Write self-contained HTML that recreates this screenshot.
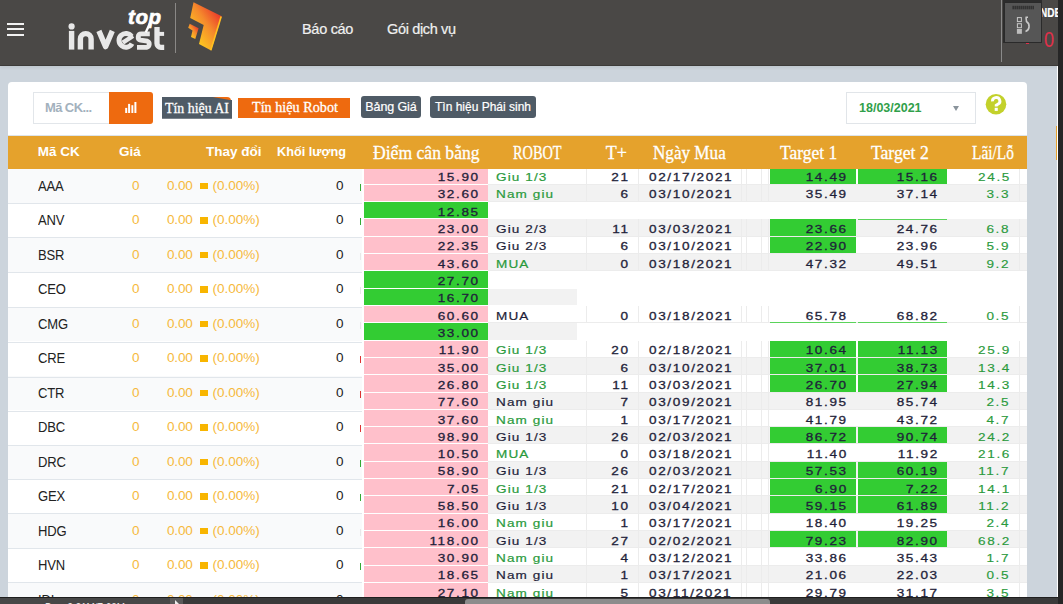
<!DOCTYPE html><html><head><meta charset="utf-8"><style>*{margin:0;padding:0;box-sizing:border-box}
html,body{width:1063px;height:604px;overflow:hidden}
body{background:#ccd4dc;font-family:"Liberation Sans",sans-serif;position:relative}
.abs{position:absolute}
#hdr{position:absolute;left:0;top:0;width:1063px;height:66px;background:#4a4846;border-bottom:1px solid #3d3b39;box-shadow:0 2px 3px rgba(0,0,0,0.06)}
.hb{position:absolute;left:7px;width:17px;height:2px;background:#f2f2f2}
.nav{position:absolute;top:20px;color:#f0f0f0;font-size:14.5px;line-height:18px;-webkit-text-stroke:0.2px #f0f0f0}
#card{position:absolute;left:8px;top:82px;width:1019px;height:600px;background:#fff;border-radius:4px}
#inp{position:absolute;left:33px;top:92px;width:77px;height:32px;border:1px solid #e2e6ea;background:#fff}
#inp span{position:absolute;left:11px;top:7px;font-size:13px;font-weight:bold;color:#a3b1bd;letter-spacing:-0.6px}
#obtn{position:absolute;left:109px;top:92px;width:44px;height:32px;background:#ee6a0f;border-radius:0 3px 3px 0}
.btn{position:absolute;color:#fff;white-space:nowrap}
.serif{font-family:"Liberation Serif",serif}
#thdr{position:absolute;left:8px;top:136px;width:1019px;height:32.7px;background:#e5a22c;z-index:2}
.th{z-index:3}
.th{position:absolute;color:#fff;white-space:nowrap}
.ths{font-weight:bold;font-size:13.5px;top:144px}
.thr{font-family:"Liberation Serif",serif;font-size:18px;top:143px;-webkit-text-stroke:0.3px #fff;transform-origin:0 0}
.ths{transform-origin:0 0}
#lt{position:absolute;left:8px;top:168.5px;width:354px;height:450px}
.lr{position:absolute;left:0;width:354px;height:34.5px;background:#fff}
.lb{position:absolute;left:0;width:354px;height:1px;background:#e1e6eb}
.lr.odd{background:#f9fafb}
.lr span{position:absolute;top:9px;letter-spacing:-0.15px;font-size:13.5px;line-height:16px;white-space:nowrap}
.c1{left:30px;color:#222;font-size:14px!important;transform:scaleX(0.93);transform-origin:0 0;margin-top:0.2px}
.c2{left:124px;color:#f6b93b}
.c3{left:159px;color:#f6b93b}
.c3b{left:204.5px;color:#f6b93b;letter-spacing:0!important}
.c4{left:328px;color:#222}
.sq{position:absolute;left:192px;top:14.1px;width:7.6px;height:6.9px;background:#f8b500}
.tick{position:absolute;left:352px;top:15px;width:1.2px;height:7px}
#rt{position:absolute;left:0;top:167.4px;width:1063px;height:450px}
.rr{position:absolute;left:0;width:1063px;height:17.317px}
.rr .bg{position:absolute;left:488px;width:539px;top:0;height:17.317px;border-bottom:1px solid #ececec}
.rr.g .bg{background:#f2f2f2}
.cell{position:absolute;top:0;height:16.317px}
.c-dcb{left:364px;width:123.6px}
.c-stub{left:488px;width:89px;background:#f2f2f2}
.c-t1{left:769.7px;width:86.3px}
.c-t2{left:857.8px;width:89.4px}
.pk{background:#ffc0cb}
.gr{background:#33cc33}
.tx{position:absolute;top:1.7px;line-height:16px;font-size:11.5px;color:#1f1f3a;white-space:nowrap;transform:scaleX(1.178);-webkit-text-stroke:0.3px currentColor}
.tr{transform-origin:100% 50%}
.tl{transform-origin:0 50%}
.num{letter-spacing:1.4px}
.wd{letter-spacing:0.95px}
.grn{color:#2a9a3c}
#foot{position:absolute;left:0;top:597px;width:1063px;height:7px;background:#3a3a3a;border-top:1px solid #1f1f1f;overflow:hidden}
#foot .fl{position:absolute;left:0;top:0;width:170px;height:6px;background:#474747}
#foot .fb{position:absolute;left:170px;top:0;width:13px;height:6px;background:#5a5a5a}
#wline{position:absolute;left:1057px;top:66px;width:1px;height:531px;background:#fff}
#foot .thumb{position:absolute;left:465px;top:1.3px;width:305px;height:6px;background:#8c8c8c;border-radius:3px 3px 0 0}
.ft{position:absolute;left:45px;top:2.5px;font-size:12px;line-height:14px;color:#e8e8e8;transform:scaleX(0.82);transform-origin:0 0}
#rstrip{position:absolute;left:1058px;top:0;width:5px;height:604px;background:#262626}
.vl{position:absolute;top:0;width:1px;height:17.317px;background:#ececec}
.gl{position:absolute;height:1px;background:#5ad35a}
.lai{-webkit-text-stroke:0.15px currentColor!important}
.rr{border-bottom:0}
#foot .far{position:absolute;left:174.5px;top:2px;width:0;height:0;border-left:4px solid #eee;border-top:4px solid transparent;border-bottom:4px solid transparent}
.wd{-webkit-text-stroke:0.2px currentColor}
</style></head><body><div id="hdr">
 <i class="hb" style="top:23px"></i><i class="hb" style="top:28px"></i><i class="hb" style="top:34px"></i>
 <div class="abs" style="left:128px;top:6px;font-size:20.5px;font-weight:bold;font-style:italic;color:#fff;line-height:22px;letter-spacing:0.6px;-webkit-text-stroke:0.7px #fff">top</div>
 <svg class="abs" style="left:0;top:0" width="170" height="60" fill="none" stroke="#e8e8e8">
  <rect x="68.9" y="30.9" width="5.4" height="18.7" fill="#e8e8e8" stroke="none"/>
  <circle cx="71.6" cy="26.4" r="3.1" fill="#e8e8e8" stroke="none"/>
  <path d="M80.4,49.6 V39 A5.35,5.35 0 0 1 91.1,39 V49.6" stroke-width="5.4"/>
  <path d="M98.9,30.9 L105.6,46.6 L112.3,30.9" stroke-width="5.4" stroke-linejoin="round"/>
  <path d="M131.6,36.4 A6.9,6.9 0 1 0 132,43.6" stroke-width="5"/><path d="M122.8,42.6 L133,36" stroke-width="4.4"/>
  <path d="M149.8,33.9 H141.3 A3.2,3.2 0 0 0 140.6,40.2 L147.3,41.2 A3.2,3.2 0 0 1 146.6,47.3 H137" stroke-width="4.8"/>
  <path d="M157,26.9 V43.5 A3.8,3.8 0 0 0 160.8,47.3 H164.2" stroke-width="5.3"/>
  <rect x="157" y="31.9" width="7.1" height="4" fill="#e8e8e8" stroke="none"/>
  <path d="M151.1,21 L145.8,32.2" stroke="#fff" stroke-width="2.4"/>
 </svg>
 <i class="abs" style="left:175px;top:3px;width:1px;height:50px;background:#8a8886"></i>
 <svg class="abs" style="left:0;top:0" width="240" height="60">
  <defs><linearGradient id="lg" x1="0.95" y1="0.2" x2="0.25" y2="0.95"><stop offset="0" stop-color="#e8302a"/><stop offset="0.45" stop-color="#f58a2c"/><stop offset="1" stop-color="#ffd21e"/></linearGradient></defs>
  <polygon points="193.5,2.3 221.7,16.2 211.1,50.6 199,44 203.7,25 190.2,18.1" fill="url(#lg)"/><path d="M221.2,16.5 L210.8,50.2" stroke="#ffc020" stroke-width="1.6"/>
  <polygon points="189.7,23.7 198.6,28.3 195.3,39 191,37.1 192.5,30.6 188.2,27.8" fill="url(#lg)"/>
 </svg>
 <div class="nav" style="left:302px;letter-spacing:-0.3px">Báo cáo</div>
 <div class="nav" style="left:387px;letter-spacing:-0.35px">Gói dịch vụ</div>
 <i class="abs" style="left:1001px;top:0;width:1px;height:62px;background:#8a8a8a"></i>
 <div class="abs" style="left:1039.5px;top:6px;font-size:12.5px;font-weight:bold;color:#fff;transform:scaleX(0.8);transform-origin:0 0;line-height:14px;-webkit-text-stroke:0.2px #fff">NDEX</div>
 <div class="abs" style="left:1044px;top:28.5px;font-size:22px;color:#e0304a;line-height:22px;transform:scaleX(0.82);transform-origin:0 0">0</div>
 <i class="abs" style="left:1026px;top:42.5px;width:3px;height:1.2px;background:#e0304a"></i>
 <div class="abs" style="left:1003px;top:0;width:39px;height:43px;background:#2c2c2c"></div>
 <div class="abs" style="left:1003.5px;top:1.5px;width:38px;height:41px;background:#565656;border:1px solid #2a2a2a"></div>
 <svg class="abs" style="left:1003px;top:0" width="40" height="44">
  <g fill="#252525"><rect x="9.6" y="5.8" width="1.1" height="3.5"/><rect x="11.6" y="5.8" width="1.1" height="3.5"/><rect x="13.6" y="5.8" width="1.1" height="3.5"/><rect x="15.6" y="5.8" width="1.1" height="3.5"/><rect x="17.6" y="5.8" width="1.1" height="3.5"/><rect x="19.6" y="5.8" width="1.1" height="3.5"/><rect x="21.6" y="5.8" width="1.1" height="3.5"/><rect x="23.6" y="5.8" width="1.1" height="3.5"/><rect x="25.6" y="5.8" width="1.1" height="3.5"/><rect x="27.6" y="5.8" width="1.1" height="3.5"/><rect x="29.6" y="5.8" width="1.1" height="3.5"/></g>
  <rect x="14.4" y="17.6" width="4" height="4" fill="none" stroke="#c8c8c8" stroke-width="1"/>
  <rect x="14.4" y="23.7" width="4" height="4" fill="none" stroke="#c8c8c8" stroke-width="1"/>
  <rect x="13.9" y="29" width="5" height="4.8" fill="#bdbdbd"/>
  <path d="M22.5,17.3 H25 M23,17.3 L23.5,21.5 A5,5.5 0 0 1 22.5,31.6" fill="none" stroke="#c8c8c8" stroke-width="1.6"/>
 </svg>
</div>
<div id="card"></div>
<div id="inp"><span>Mã CK...</span></div>
<div id="obtn"><svg class="abs" style="left:16px;top:10px" width="13" height="12"><rect x="0.2" y="5.9" width="2" height="5.1" fill="#fff"/><rect x="3.1" y="1.9" width="2" height="9.1" fill="#fff"/><rect x="6.4" y="3.2" width="1.9" height="7.8" fill="#fff"/><rect x="9.4" y="0" width="2" height="11" fill="#fff"/></svg></div>
<i class="abs" style="left:211px;top:96.6px;width:20px;height:6px;background:#ee6a0f;border-radius:0 4px 0 0"></i>
<div class="abs" style="left:162px;top:97px;width:70px;height:21.8px;background:#4f5b66;clip-path:polygon(0 0,72.5% 0,97% 14%,100% 14%,100% 100%,0 100%)"></div>
<span id="bai" class="btn serif" style="transform:scaleX(0.925);left:165px;top:96.5px;font-size:15px;line-height:22px;transform-origin:0 0;-webkit-text-stroke:0.3px #fff">Tín hiệu AI</span>
<div class="abs" style="left:238px;top:98px;width:112px;height:20px;background:#ee6a0f"></div>
<span id="brob" class="btn serif" style="transform:scaleX(0.946);left:252px;top:96px;font-size:15px;line-height:22px;transform-origin:0 0;-webkit-text-stroke:0.3px #fff">Tín hiệu Robot</span>
<div class="btn" style="left:361px;top:96px;width:60px;height:22px;background:#4f5b66;border-radius:3px;font-size:12.5px;line-height:22px;text-align:center;letter-spacing:-0.1px;-webkit-text-stroke:0.2px #fff">Bảng Giá</div>
<div class="btn" style="left:430px;top:96px;width:106px;height:22px;background:#4f5b66;border-radius:3px;font-size:12px;line-height:22px;text-align:center;-webkit-text-stroke:0.2px #fff">Tìn hiệu Phái sinh</div>
<div class="abs" style="left:846px;top:92px;width:130px;height:32px;border:1px solid #e1e5e9;background:#fff"><span class="abs" style="left:12px;top:8px;font-size:12.5px;line-height:15px;font-weight:bold;color:#30a04a">18/03/2021</span><i class="abs" style="left:106px;top:13px;width:0;height:0;border-left:3.6px solid transparent;border-right:3.6px solid transparent;border-top:5px solid #8a949c"></i></div>
<svg class="abs" style="left:985px;top:93px" width="23" height="23"><circle cx="11" cy="11.2" r="10.3" fill="#c3d12b"/><path d="M7.5,8.4 A3.7,3.5 0 1 1 12.8,11.2 L11.2,12.3 V13.6" fill="none" stroke="#fff" stroke-width="2.9"/><rect x="9.7" y="14.8" width="3.1" height="3.1" fill="#fff"/></svg>
<i class="abs" style="left:8px;top:134.5px;width:1019px;height:1.6px;background:#dde4ea"></i><div id="thdr"></div><i class="abs" style="left:1056px;top:125.5px;width:1.5px;height:34.5px;background:#e5a22c"></i>
<span id="h0" class="th ths" style="left:37.8px;transform:scaleX(1.0)">Mã CK</span>
<span id="h1" class="th ths" style="left:119px">Giá</span>
<span id="h2" class="th ths" style="left:206px">Thay đổi</span>
<span id="h3" class="th ths" style="left:276.7px;transform:scaleX(0.94)">Khối lượng</span>
<span id="h4" class="th thr" style="left:373.1px;transform:scaleX(0.978)">Điểm cân bằng</span>
<span id="h5" class="th thr" style="left:512.9px;transform:scaleX(0.797)">ROBOT</span>
<span id="h6" class="th thr" style="left:605.7px">T+</span>
<span id="h7" class="th thr" style="left:652.7px;transform:scaleX(0.951)">Ngày Mua</span>
<span id="h8" class="th thr" style="left:780.3px;transform:scaleX(0.97)">Target 1</span>
<span id="h9" class="th thr" style="left:870.8px;transform:scaleX(0.98)">Target 2</span>
<span id="h10" class="th thr" style="left:971.5px;transform:scaleX(0.854)">Lãi/Lỗ</span>
<div id="lt"><div class="lr odd" style="top:0.00px"><span class="c1">AAA</span><span class="c2">0</span><span class="c3">0.00</span><i class="sq"></i><span class="c3b">(0.00%)</span><span class="c4">0</span><i class="tick" style="background:#3a3"></i></div><div class="lr" style="top:34.50px"><span class="c1">ANV</span><span class="c2">0</span><span class="c3">0.00</span><i class="sq"></i><span class="c3b">(0.00%)</span><span class="c4">0</span><i class="tick" style="background:#3a3"></i></div><div class="lr odd" style="top:69.00px"><span class="c1">BSR</span><span class="c2">0</span><span class="c3">0.00</span><i class="sq"></i><span class="c3b">(0.00%)</span><span class="c4">0</span><i class="tick" style="background:#e8e8e8"></i></div><div class="lr" style="top:103.50px"><span class="c1">CEO</span><span class="c2">0</span><span class="c3">0.00</span><i class="sq"></i><span class="c3b">(0.00%)</span><span class="c4">0</span><i class="tick" style="background:#e8e8e8"></i></div><div class="lr odd" style="top:138.00px"><span class="c1">CMG</span><span class="c2">0</span><span class="c3">0.00</span><i class="sq"></i><span class="c3b">(0.00%)</span><span class="c4">0</span><i class="tick" style="background:#e8e8e8"></i></div><div class="lr" style="top:172.50px"><span class="c1">CRE</span><span class="c2">0</span><span class="c3">0.00</span><i class="sq"></i><span class="c3b">(0.00%)</span><span class="c4">0</span><i class="tick" style="background:#d33"></i></div><div class="lr odd" style="top:207.00px"><span class="c1">CTR</span><span class="c2">0</span><span class="c3">0.00</span><i class="sq"></i><span class="c3b">(0.00%)</span><span class="c4">0</span><i class="tick" style="background:#d33"></i></div><div class="lr" style="top:241.50px"><span class="c1">DBC</span><span class="c2">0</span><span class="c3">0.00</span><i class="sq"></i><span class="c3b">(0.00%)</span><span class="c4">0</span><i class="tick" style="background:#d33"></i></div><div class="lr odd" style="top:276.00px"><span class="c1">DRC</span><span class="c2">0</span><span class="c3">0.00</span><i class="sq"></i><span class="c3b">(0.00%)</span><span class="c4">0</span><i class="tick" style="background:#3a3"></i></div><div class="lr" style="top:310.50px"><span class="c1">GEX</span><span class="c2">0</span><span class="c3">0.00</span><i class="sq"></i><span class="c3b">(0.00%)</span><span class="c4">0</span><i class="tick" style="background:#3a3"></i></div><div class="lr odd" style="top:345.00px"><span class="c1">HDG</span><span class="c2">0</span><span class="c3">0.00</span><i class="sq"></i><span class="c3b">(0.00%)</span><span class="c4">0</span><i class="tick" style="background:#e8e8e8"></i></div><div class="lr" style="top:379.50px"><span class="c1">HVN</span><span class="c2">0</span><span class="c3">0.00</span><i class="sq"></i><span class="c3b">(0.00%)</span><span class="c4">0</span><i class="tick" style="background:#3a3"></i></div><div class="lr odd" style="top:414.00px"><span class="c1">IDI</span><span class="c2">0</span><span class="c3">0.00</span><i class="sq"></i><span class="c3b">(0.00%)</span><span class="c4">0</span><i class="tick" style="background:#e8e8e8"></i></div><i class="lb" style="top:34.40px"></i><i class="lb" style="top:68.40px"></i><i class="lb" style="top:103.40px"></i><i class="lb" style="top:138.40px"></i><i class="lb" style="top:173.40px"></i><i class="lb" style="top:208.40px"></i><i class="lb" style="top:242.40px"></i><i class="lb" style="top:276.40px"></i><i class="lb" style="top:310.40px"></i><i class="lb" style="top:344.40px"></i><i class="lb" style="top:379.40px"></i><i class="lb" style="top:413.40px"></i></div><div id="rt"><div class="rr w" style="top:0.00px"><i class="bg"></i><i class="vl" style="left:586px"></i><i class="vl" style="left:638px"></i><i class="vl" style="left:741px"></i><i class="vl" style="left:746px"></i><i class="vl" style="left:761px"></i><i class="vl" style="left:768px"></i><i class="vl" style="left:1019px"></i><i class="cell c-dcb pk"></i><i class="cell c-t1 gr"></i><i class="cell c-t2 gr"></i><span class="tx tr num" style="right:583.0px">15.90</span><span class="tx tl wd grn" style="left:496.0px">Giu 1/3</span><span class="tx tr num" style="right:433.0px">21</span><span class="tx tl num" style="left:648.5px">02/17/2021</span><span class="tx tr num" style="right:215.5px">14.49</span><span class="tx tr num" style="right:124.5px">15.16</span><span class="tx tr num grn lai" style="right:52.5px">24.5</span></div><div class="rr g" style="top:17.32px"><i class="bg"></i><i class="vl" style="left:586px"></i><i class="vl" style="left:638px"></i><i class="vl" style="left:741px"></i><i class="vl" style="left:746px"></i><i class="vl" style="left:761px"></i><i class="vl" style="left:768px"></i><i class="vl" style="left:1019px"></i><i class="cell c-dcb pk"></i><span class="tx tr num" style="right:583.0px">32.60</span><span class="tx tl wd grn" style="left:496.0px">Nam giu</span><span class="tx tr num" style="right:433.0px">6</span><span class="tx tl num" style="left:648.5px">03/10/2021</span><span class="tx tr num" style="right:215.5px">35.49</span><span class="tx tr num" style="right:124.5px">37.14</span><span class="tx tr num grn lai" style="right:52.5px">3.3</span></div><div class="rr w" style="top:34.63px"><i class="cell c-dcb gr"></i><span class="tx tr num" style="right:583.0px">12.85</span></div><div class="rr g" style="top:51.95px"><i class="bg"></i><i class="vl" style="left:586px"></i><i class="vl" style="left:638px"></i><i class="vl" style="left:741px"></i><i class="vl" style="left:746px"></i><i class="vl" style="left:761px"></i><i class="vl" style="left:768px"></i><i class="vl" style="left:1019px"></i><i class="gl" style="left:857.8px;top:0;width:89.4px"></i><i class="cell c-dcb pk"></i><i class="cell c-t1 gr"></i><span class="tx tr num" style="right:583.0px">23.00</span><span class="tx tl wd" style="left:496.0px">Giu 2/3</span><span class="tx tr num" style="right:433.0px">11</span><span class="tx tl num" style="left:648.5px">03/03/2021</span><span class="tx tr num" style="right:215.5px">23.66</span><span class="tx tr num" style="right:124.5px">24.76</span><span class="tx tr num grn lai" style="right:52.5px">6.8</span></div><div class="rr w" style="top:69.27px"><i class="bg"></i><i class="vl" style="left:586px"></i><i class="vl" style="left:638px"></i><i class="vl" style="left:741px"></i><i class="vl" style="left:746px"></i><i class="vl" style="left:761px"></i><i class="vl" style="left:768px"></i><i class="vl" style="left:1019px"></i><i class="cell c-dcb pk"></i><i class="cell c-t1 gr"></i><span class="tx tr num" style="right:583.0px">22.35</span><span class="tx tl wd" style="left:496.0px">Giu 2/3</span><span class="tx tr num" style="right:433.0px">6</span><span class="tx tl num" style="left:648.5px">03/10/2021</span><span class="tx tr num" style="right:215.5px">22.90</span><span class="tx tr num" style="right:124.5px">23.96</span><span class="tx tr num grn lai" style="right:52.5px">5.9</span></div><div class="rr g" style="top:86.59px"><i class="bg"></i><i class="vl" style="left:586px"></i><i class="vl" style="left:638px"></i><i class="vl" style="left:741px"></i><i class="vl" style="left:746px"></i><i class="vl" style="left:761px"></i><i class="vl" style="left:768px"></i><i class="vl" style="left:1019px"></i><i class="cell c-dcb pk"></i><span class="tx tr num" style="right:583.0px">43.60</span><span class="tx tl wd grn" style="left:496.0px">MUA</span><span class="tx tr num" style="right:433.0px">0</span><span class="tx tl num" style="left:648.5px">03/18/2021</span><span class="tx tr num" style="right:215.5px">47.32</span><span class="tx tr num" style="right:124.5px">49.51</span><span class="tx tr num grn lai" style="right:52.5px">9.2</span></div><div class="rr w" style="top:103.90px"><i class="cell c-dcb gr"></i><span class="tx tr num" style="right:583.0px">27.70</span></div><div class="rr g" style="top:121.22px"><i class="cell c-dcb gr"></i><i class="cell c-stub"></i><span class="tx tr num" style="right:583.0px">16.70</span></div><div class="rr w" style="top:138.54px"><i class="bg"></i><i class="vl" style="left:586px"></i><i class="vl" style="left:638px"></i><i class="vl" style="left:741px"></i><i class="vl" style="left:746px"></i><i class="vl" style="left:761px"></i><i class="vl" style="left:768px"></i><i class="vl" style="left:1019px"></i><i class="gl" style="left:769.7px;top:16.317px;width:86.3px"></i><i class="gl" style="left:857.8px;top:16.317px;width:89.4px"></i><i class="cell c-dcb pk"></i><span class="tx tr num" style="right:583.0px">60.60</span><span class="tx tl wd" style="left:496.0px">MUA</span><span class="tx tr num" style="right:433.0px">0</span><span class="tx tl num" style="left:648.5px">03/18/2021</span><span class="tx tr num" style="right:215.5px">65.78</span><span class="tx tr num" style="right:124.5px">68.82</span><span class="tx tr num grn lai" style="right:52.5px">0.5</span></div><div class="rr g" style="top:155.85px"><i class="cell c-dcb gr"></i><i class="cell c-stub"></i><span class="tx tr num" style="right:583.0px">33.00</span></div><div class="rr w" style="top:173.17px"><i class="bg"></i><i class="vl" style="left:586px"></i><i class="vl" style="left:638px"></i><i class="vl" style="left:741px"></i><i class="vl" style="left:746px"></i><i class="vl" style="left:761px"></i><i class="vl" style="left:768px"></i><i class="vl" style="left:1019px"></i><i class="cell c-dcb pk"></i><i class="cell c-t1 gr"></i><i class="cell c-t2 gr"></i><span class="tx tr num" style="right:583.0px">11.90</span><span class="tx tl wd grn" style="left:496.0px">Giu 1/3</span><span class="tx tr num" style="right:433.0px">20</span><span class="tx tl num" style="left:648.5px">02/18/2021</span><span class="tx tr num" style="right:215.5px">10.64</span><span class="tx tr num" style="right:124.5px">11.13</span><span class="tx tr num grn lai" style="right:52.5px">25.9</span></div><div class="rr g" style="top:190.49px"><i class="bg"></i><i class="vl" style="left:586px"></i><i class="vl" style="left:638px"></i><i class="vl" style="left:741px"></i><i class="vl" style="left:746px"></i><i class="vl" style="left:761px"></i><i class="vl" style="left:768px"></i><i class="vl" style="left:1019px"></i><i class="cell c-dcb pk"></i><i class="cell c-t1 gr"></i><i class="cell c-t2 gr"></i><span class="tx tr num" style="right:583.0px">35.00</span><span class="tx tl wd grn" style="left:496.0px">Giu 1/3</span><span class="tx tr num" style="right:433.0px">6</span><span class="tx tl num" style="left:648.5px">03/10/2021</span><span class="tx tr num" style="right:215.5px">37.01</span><span class="tx tr num" style="right:124.5px">38.73</span><span class="tx tr num grn lai" style="right:52.5px">13.4</span></div><div class="rr w" style="top:207.80px"><i class="bg"></i><i class="vl" style="left:586px"></i><i class="vl" style="left:638px"></i><i class="vl" style="left:741px"></i><i class="vl" style="left:746px"></i><i class="vl" style="left:761px"></i><i class="vl" style="left:768px"></i><i class="vl" style="left:1019px"></i><i class="cell c-dcb pk"></i><i class="cell c-t1 gr"></i><i class="cell c-t2 gr"></i><span class="tx tr num" style="right:583.0px">26.80</span><span class="tx tl wd grn" style="left:496.0px">Giu 1/3</span><span class="tx tr num" style="right:433.0px">11</span><span class="tx tl num" style="left:648.5px">03/03/2021</span><span class="tx tr num" style="right:215.5px">26.70</span><span class="tx tr num" style="right:124.5px">27.94</span><span class="tx tr num grn lai" style="right:52.5px">14.3</span></div><div class="rr g" style="top:225.12px"><i class="bg"></i><i class="vl" style="left:586px"></i><i class="vl" style="left:638px"></i><i class="vl" style="left:741px"></i><i class="vl" style="left:746px"></i><i class="vl" style="left:761px"></i><i class="vl" style="left:768px"></i><i class="vl" style="left:1019px"></i><i class="cell c-dcb pk"></i><span class="tx tr num" style="right:583.0px">77.60</span><span class="tx tl wd" style="left:496.0px">Nam giu</span><span class="tx tr num" style="right:433.0px">7</span><span class="tx tl num" style="left:648.5px">03/09/2021</span><span class="tx tr num" style="right:215.5px">81.95</span><span class="tx tr num" style="right:124.5px">85.74</span><span class="tx tr num grn lai" style="right:52.5px">2.5</span></div><div class="rr w" style="top:242.44px"><i class="bg"></i><i class="vl" style="left:586px"></i><i class="vl" style="left:638px"></i><i class="vl" style="left:741px"></i><i class="vl" style="left:746px"></i><i class="vl" style="left:761px"></i><i class="vl" style="left:768px"></i><i class="vl" style="left:1019px"></i><i class="cell c-dcb pk"></i><span class="tx tr num" style="right:583.0px">37.60</span><span class="tx tl wd grn" style="left:496.0px">Nam giu</span><span class="tx tr num" style="right:433.0px">1</span><span class="tx tl num" style="left:648.5px">03/17/2021</span><span class="tx tr num" style="right:215.5px">41.79</span><span class="tx tr num" style="right:124.5px">43.72</span><span class="tx tr num grn lai" style="right:52.5px">4.7</span></div><div class="rr g" style="top:259.75px"><i class="bg"></i><i class="vl" style="left:586px"></i><i class="vl" style="left:638px"></i><i class="vl" style="left:741px"></i><i class="vl" style="left:746px"></i><i class="vl" style="left:761px"></i><i class="vl" style="left:768px"></i><i class="vl" style="left:1019px"></i><i class="cell c-dcb pk"></i><i class="cell c-t1 gr"></i><i class="cell c-t2 gr"></i><span class="tx tr num" style="right:583.0px">98.90</span><span class="tx tl wd" style="left:496.0px">Giu 1/3</span><span class="tx tr num" style="right:433.0px">26</span><span class="tx tl num" style="left:648.5px">02/03/2021</span><span class="tx tr num" style="right:215.5px">86.72</span><span class="tx tr num" style="right:124.5px">90.74</span><span class="tx tr num grn lai" style="right:52.5px">24.2</span></div><div class="rr w" style="top:277.07px"><i class="bg"></i><i class="vl" style="left:586px"></i><i class="vl" style="left:638px"></i><i class="vl" style="left:741px"></i><i class="vl" style="left:746px"></i><i class="vl" style="left:761px"></i><i class="vl" style="left:768px"></i><i class="vl" style="left:1019px"></i><i class="cell c-dcb pk"></i><span class="tx tr num" style="right:583.0px">10.50</span><span class="tx tl wd grn" style="left:496.0px">MUA</span><span class="tx tr num" style="right:433.0px">0</span><span class="tx tl num" style="left:648.5px">03/18/2021</span><span class="tx tr num" style="right:215.5px">11.40</span><span class="tx tr num" style="right:124.5px">11.92</span><span class="tx tr num grn lai" style="right:52.5px">21.6</span></div><div class="rr g" style="top:294.39px"><i class="bg"></i><i class="vl" style="left:586px"></i><i class="vl" style="left:638px"></i><i class="vl" style="left:741px"></i><i class="vl" style="left:746px"></i><i class="vl" style="left:761px"></i><i class="vl" style="left:768px"></i><i class="vl" style="left:1019px"></i><i class="cell c-dcb pk"></i><i class="cell c-t1 gr"></i><i class="cell c-t2 gr"></i><span class="tx tr num" style="right:583.0px">58.90</span><span class="tx tl wd" style="left:496.0px">Giu 1/3</span><span class="tx tr num" style="right:433.0px">26</span><span class="tx tl num" style="left:648.5px">02/03/2021</span><span class="tx tr num" style="right:215.5px">57.53</span><span class="tx tr num" style="right:124.5px">60.19</span><span class="tx tr num grn lai" style="right:52.5px">11.7</span></div><div class="rr w" style="top:311.71px"><i class="bg"></i><i class="vl" style="left:586px"></i><i class="vl" style="left:638px"></i><i class="vl" style="left:741px"></i><i class="vl" style="left:746px"></i><i class="vl" style="left:761px"></i><i class="vl" style="left:768px"></i><i class="vl" style="left:1019px"></i><i class="cell c-dcb pk"></i><i class="cell c-t1 gr"></i><i class="cell c-t2 gr"></i><span class="tx tr num" style="right:583.0px">7.05</span><span class="tx tl wd grn" style="left:496.0px">Giu 1/3</span><span class="tx tr num" style="right:433.0px">21</span><span class="tx tl num" style="left:648.5px">02/17/2021</span><span class="tx tr num" style="right:215.5px">6.90</span><span class="tx tr num" style="right:124.5px">7.22</span><span class="tx tr num grn lai" style="right:52.5px">14.1</span></div><div class="rr g" style="top:329.02px"><i class="bg"></i><i class="vl" style="left:586px"></i><i class="vl" style="left:638px"></i><i class="vl" style="left:741px"></i><i class="vl" style="left:746px"></i><i class="vl" style="left:761px"></i><i class="vl" style="left:768px"></i><i class="vl" style="left:1019px"></i><i class="cell c-dcb pk"></i><i class="cell c-t1 gr"></i><i class="cell c-t2 gr"></i><span class="tx tr num" style="right:583.0px">58.50</span><span class="tx tl wd" style="left:496.0px">Giu 1/3</span><span class="tx tr num" style="right:433.0px">10</span><span class="tx tl num" style="left:648.5px">03/04/2021</span><span class="tx tr num" style="right:215.5px">59.15</span><span class="tx tr num" style="right:124.5px">61.89</span><span class="tx tr num grn lai" style="right:52.5px">11.2</span></div><div class="rr w" style="top:346.34px"><i class="bg"></i><i class="vl" style="left:586px"></i><i class="vl" style="left:638px"></i><i class="vl" style="left:741px"></i><i class="vl" style="left:746px"></i><i class="vl" style="left:761px"></i><i class="vl" style="left:768px"></i><i class="vl" style="left:1019px"></i><i class="cell c-dcb pk"></i><span class="tx tr num" style="right:583.0px">16.00</span><span class="tx tl wd grn" style="left:496.0px">Nam giu</span><span class="tx tr num" style="right:433.0px">1</span><span class="tx tl num" style="left:648.5px">03/17/2021</span><span class="tx tr num" style="right:215.5px">18.40</span><span class="tx tr num" style="right:124.5px">19.25</span><span class="tx tr num grn lai" style="right:52.5px">2.4</span></div><div class="rr g" style="top:363.66px"><i class="bg"></i><i class="vl" style="left:586px"></i><i class="vl" style="left:638px"></i><i class="vl" style="left:741px"></i><i class="vl" style="left:746px"></i><i class="vl" style="left:761px"></i><i class="vl" style="left:768px"></i><i class="vl" style="left:1019px"></i><i class="cell c-dcb pk"></i><i class="cell c-t1 gr"></i><i class="cell c-t2 gr"></i><span class="tx tr num" style="right:583.0px">118.00</span><span class="tx tl wd" style="left:496.0px">Giu 1/3</span><span class="tx tr num" style="right:433.0px">27</span><span class="tx tl num" style="left:648.5px">02/02/2021</span><span class="tx tr num" style="right:215.5px">79.23</span><span class="tx tr num" style="right:124.5px">82.90</span><span class="tx tr num grn lai" style="right:52.5px">68.2</span></div><div class="rr w" style="top:380.97px"><i class="bg"></i><i class="vl" style="left:586px"></i><i class="vl" style="left:638px"></i><i class="vl" style="left:741px"></i><i class="vl" style="left:746px"></i><i class="vl" style="left:761px"></i><i class="vl" style="left:768px"></i><i class="vl" style="left:1019px"></i><i class="cell c-dcb pk"></i><span class="tx tr num" style="right:583.0px">30.90</span><span class="tx tl wd grn" style="left:496.0px">Nam giu</span><span class="tx tr num" style="right:433.0px">4</span><span class="tx tl num" style="left:648.5px">03/12/2021</span><span class="tx tr num" style="right:215.5px">33.86</span><span class="tx tr num" style="right:124.5px">35.43</span><span class="tx tr num grn lai" style="right:52.5px">1.7</span></div><div class="rr g" style="top:398.29px"><i class="bg"></i><i class="vl" style="left:586px"></i><i class="vl" style="left:638px"></i><i class="vl" style="left:741px"></i><i class="vl" style="left:746px"></i><i class="vl" style="left:761px"></i><i class="vl" style="left:768px"></i><i class="vl" style="left:1019px"></i><i class="cell c-dcb pk"></i><span class="tx tr num" style="right:583.0px">18.65</span><span class="tx tl wd" style="left:496.0px">Nam giu</span><span class="tx tr num" style="right:433.0px">1</span><span class="tx tl num" style="left:648.5px">03/17/2021</span><span class="tx tr num" style="right:215.5px">21.06</span><span class="tx tr num" style="right:124.5px">22.03</span><span class="tx tr num grn lai" style="right:52.5px">0.5</span></div><div class="rr w" style="top:415.61px"><i class="bg"></i><i class="vl" style="left:586px"></i><i class="vl" style="left:638px"></i><i class="vl" style="left:741px"></i><i class="vl" style="left:746px"></i><i class="vl" style="left:761px"></i><i class="vl" style="left:768px"></i><i class="vl" style="left:1019px"></i><i class="cell c-dcb pk"></i><span class="tx tr num" style="right:583.0px">27.10</span><span class="tx tl wd grn" style="left:496.0px">Nam giu</span><span class="tx tr num" style="right:433.0px">5</span><span class="tx tl num" style="left:648.5px">03/11/2021</span><span class="tx tr num" style="right:215.5px">29.79</span><span class="tx tr num" style="right:124.5px">31.17</span><span class="tx tr num grn lai" style="right:52.5px">3.5</span></div></div><div id="foot"><i class="fl"></i><i class="fb"></i><i class="far"></i><span class="ft">Dow 3.31M/7.68M</span><i class="thumb"></i></div><i id="wline"></i><div id="rstrip"></div></body></html>
